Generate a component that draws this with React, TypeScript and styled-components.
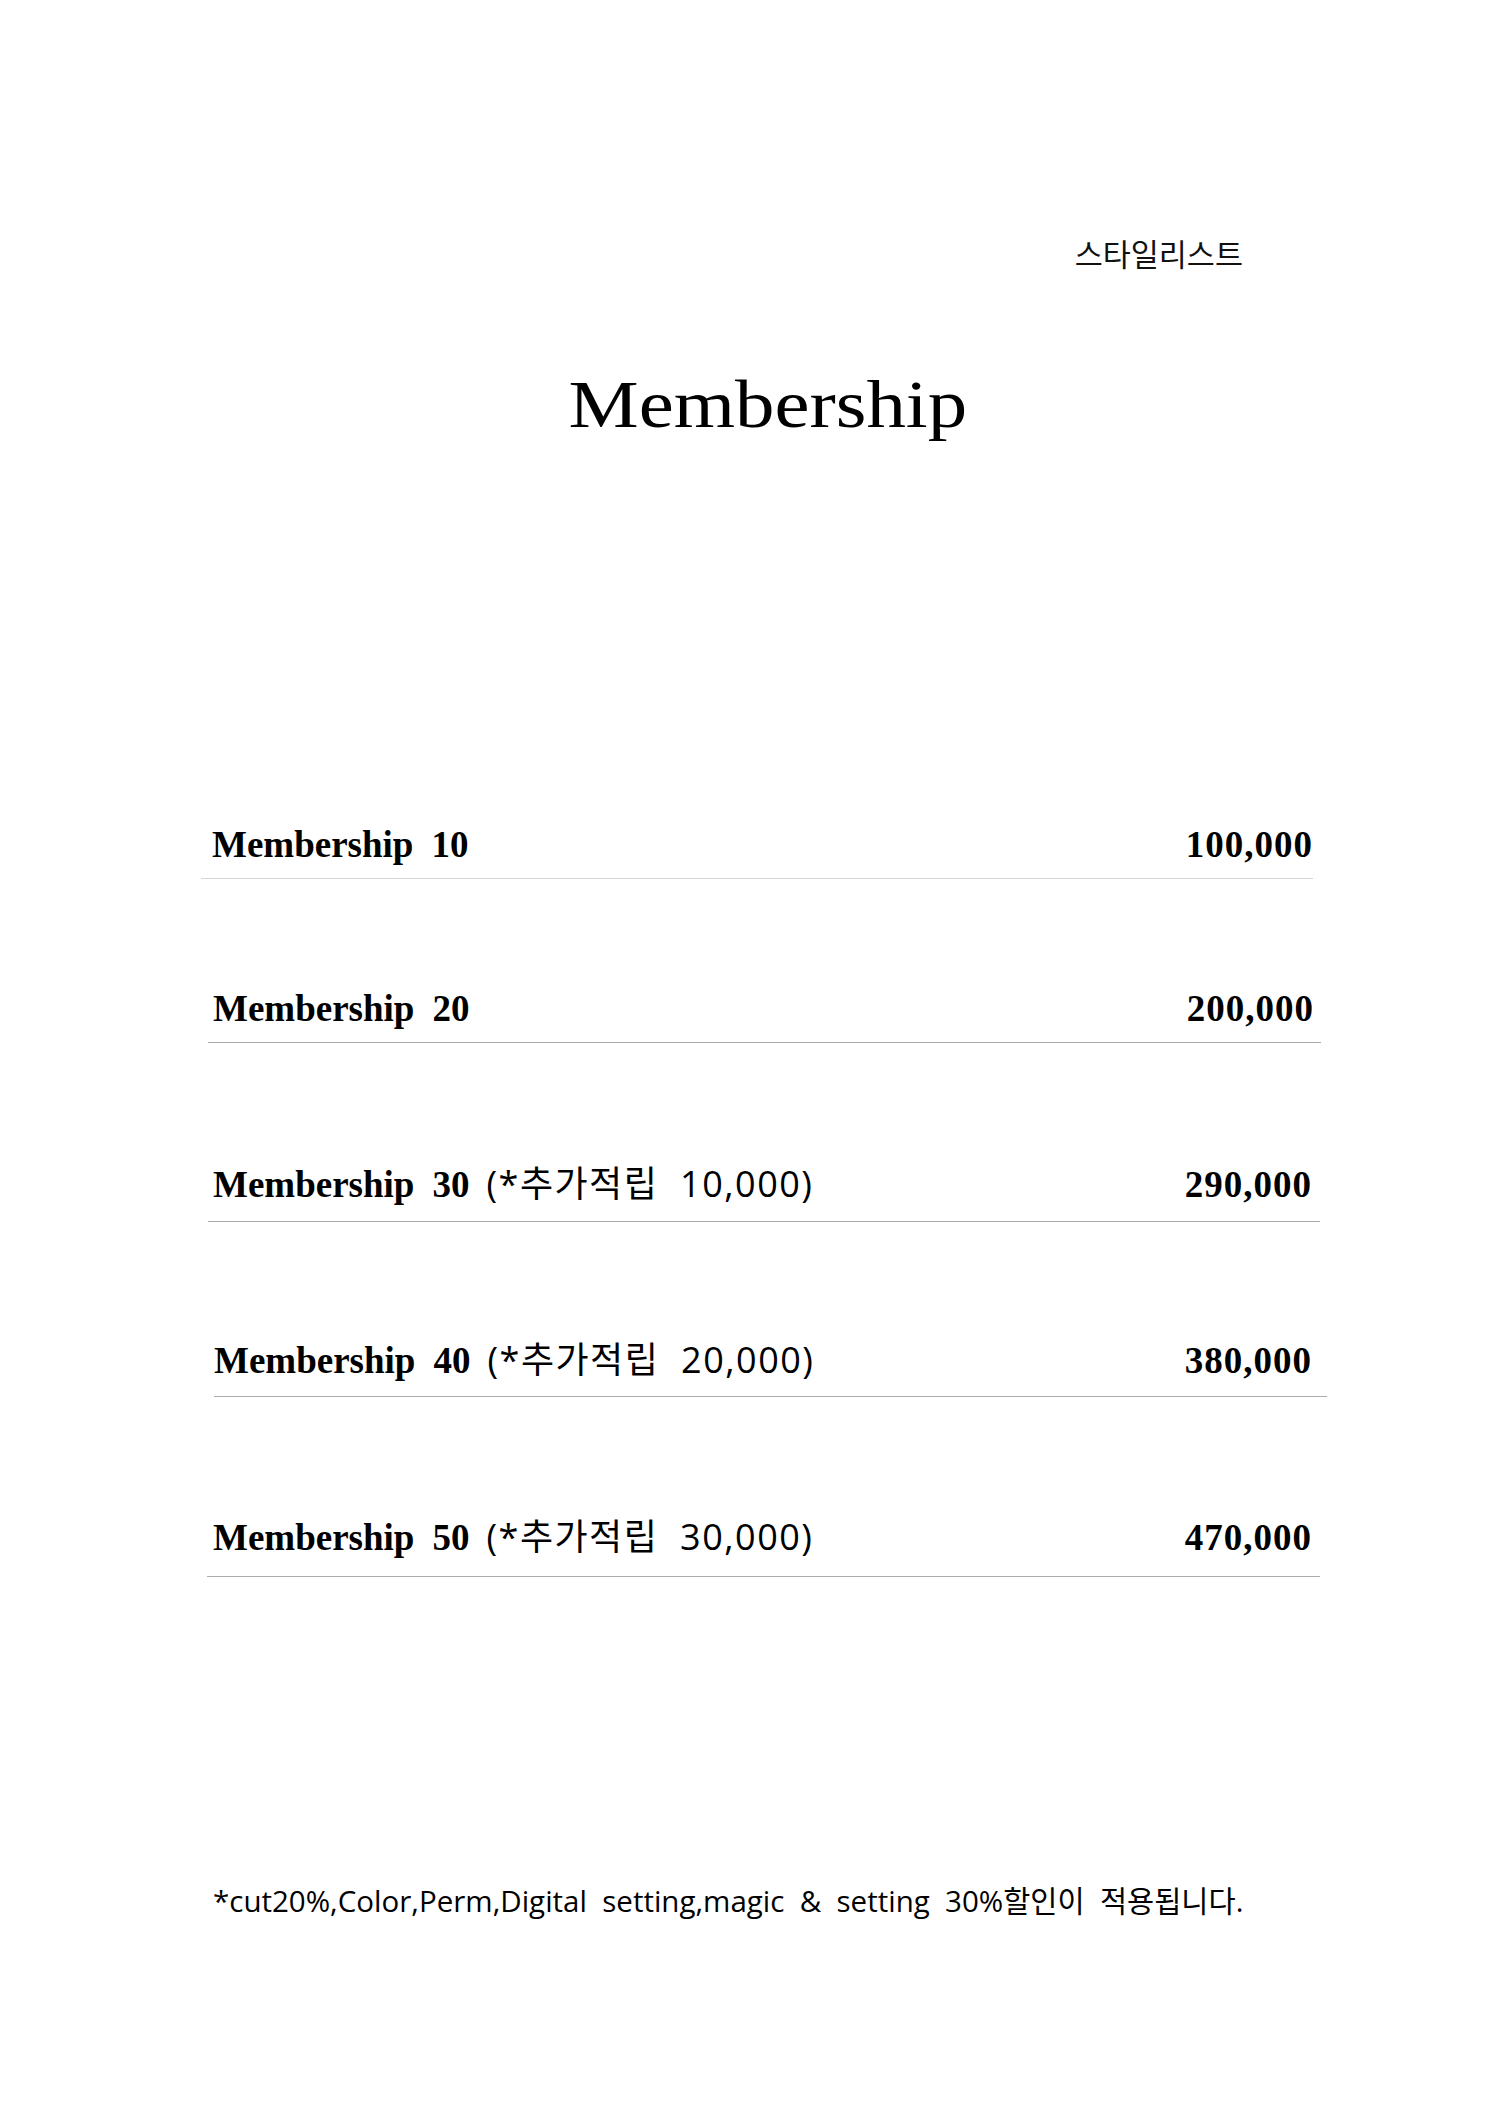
import React from "react";
import styled, { createGlobalStyle } from "styled-components";

const Global = createGlobalStyle`
  html, body { margin: 0; padding: 0; background: #ffffff; }
  body { font-family: "Liberation Serif", "Times New Roman", serif; color: #000; }
`;

const Sheet = styled.div`
  width: 1499px;
  min-height: 2127px;
  background: #ffffff;
  display: flex;
  flex-direction: column;
  overflow: hidden;
`;

const Stylist = styled.div`
  margin-top: 232px;
  padding-right: 256px;
  text-align: right;
  font-family: "Noto Sans CJK KR", "Noto Sans", sans-serif;
  font-size: 30.5px;
  line-height: 42px;
  color: #111;
`;

const TitleWrap = styled.div`
  margin-top: 90px;
  padding-left: 36px;
  display: flex;
  justify-content: center;
  height: 80px;
`;

const Title = styled.h1`
  margin: 0;
  font-family: "Liberation Serif", "Times New Roman", serif;
  font-weight: 400;
  font-size: 68px;
  line-height: 80px;
  display: inline-block;
  transform: scaleX(1.16);
  transform-origin: center;
  color: #000;
`;

const Row = styled.div<{ $mt: number; $pb: number; $l: number; $r: number; $pl: number; $pr: number; $line: string }>`
  margin-top: ${(p) => p.$mt}px;
  margin-left: ${(p) => p.$l}px;
  width: ${(p) => p.$r - p.$l}px;
  box-sizing: border-box;
  padding: 0 ${(p) => p.$pr}px ${(p) => p.$pb}px ${(p) => p.$pl}px;
  display: flex;
  align-items: baseline;
  justify-content: space-between;
  border-bottom: 1px solid ${(p) => p.$line};
  line-height: 1;
`;

const Label = styled.div`
  display: flex;
  align-items: baseline;
  line-height: 1;
`;

const Bold = styled.span<{ $gap?: number }>`
  font-family: "Liberation Serif", "Times New Roman", serif;
  font-weight: 700;
  font-size: 37px;
  line-height: 1;
  margin-left: ${(p) => p.$gap ?? 0}px;
  color: #000;
`;

const Bonus = styled.span`
  margin-left: 17px;
  font-family: "Open Sans", "Noto Sans CJK KR", sans-serif;
  font-size: 36px;
  letter-spacing: 1.5px;
  line-height: 1;
  white-space: pre;
  color: #000;
`;

const Price = styled.span`
  font-family: "Liberation Serif", "Times New Roman", serif;
  font-weight: 700;
  font-size: 37px;
  letter-spacing: 1px;
  line-height: 1;
  color: #000;
`;

const Footer = styled.div`
  margin-top: 304px;
  padding-left: 213px;
  font-family: "Open Sans", "Noto Sans CJK KR", sans-serif;
  font-size: 29.5px;
  line-height: 40px;
  white-space: pre;
  color: #000;
`;

type Item = {
  n: string;
  bonus?: string;
  price: string;
  mt: number;
  pb: number;
  l: number;
  r: number;
  pl: number;
  pr: number;
  line: string;
};

const items: Item[] = [
  { n: "10", price: "100,000", mt: 382, pb: 15, l: 201, r: 1313, pl: 11, pr: 0, line: "#d4d4d4" },
  { n: "20", price: "200,000", mt: 111, pb: 15, l: 208, r: 1321, pl: 5, pr: 7, line: "#ababab" },
  { n: "30", bonus: "(*추가적립  10,000)", price: "290,000", mt: 123, pb: 18, l: 208, r: 1320, pl: 5, pr: 8, line: "#ababab" },
  { n: "40", bonus: "(*추가적립  20,000)", price: "380,000", mt: 120, pb: 17, l: 214, r: 1327, pl: 0, pr: 15, line: "#ababab" },
  { n: "50", bonus: "(*추가적립  30,000)", price: "470,000", mt: 122, pb: 20, l: 207, r: 1320, pl: 6, pr: 8, line: "#ababab" },
];

export default function App() {
  return (
    <>
      <Global />
      <Sheet>
        <Stylist>스타일리스트</Stylist>
        <TitleWrap>
          <Title>Membership</Title>
        </TitleWrap>
        {items.map((it) => (
          <Row
            key={it.n}
            $mt={it.mt}
            $pb={it.pb}
            $l={it.l}
            $r={it.r}
            $pl={it.pl}
            $pr={it.pr}
            $line={it.line}
          >
            <Label>
              <Bold>Membership</Bold>
              <Bold $gap={18}>{it.n}</Bold>
              {it.bonus && <Bonus>{it.bonus}</Bonus>}
            </Label>
            <Price>{it.price}</Price>
          </Row>
        ))}
        <Footer>{"*cut20%,Color,Perm,Digital  setting,magic  &  setting  30%할인이  적용됩니다."}</Footer>
      </Sheet>
    </>
  );
}
